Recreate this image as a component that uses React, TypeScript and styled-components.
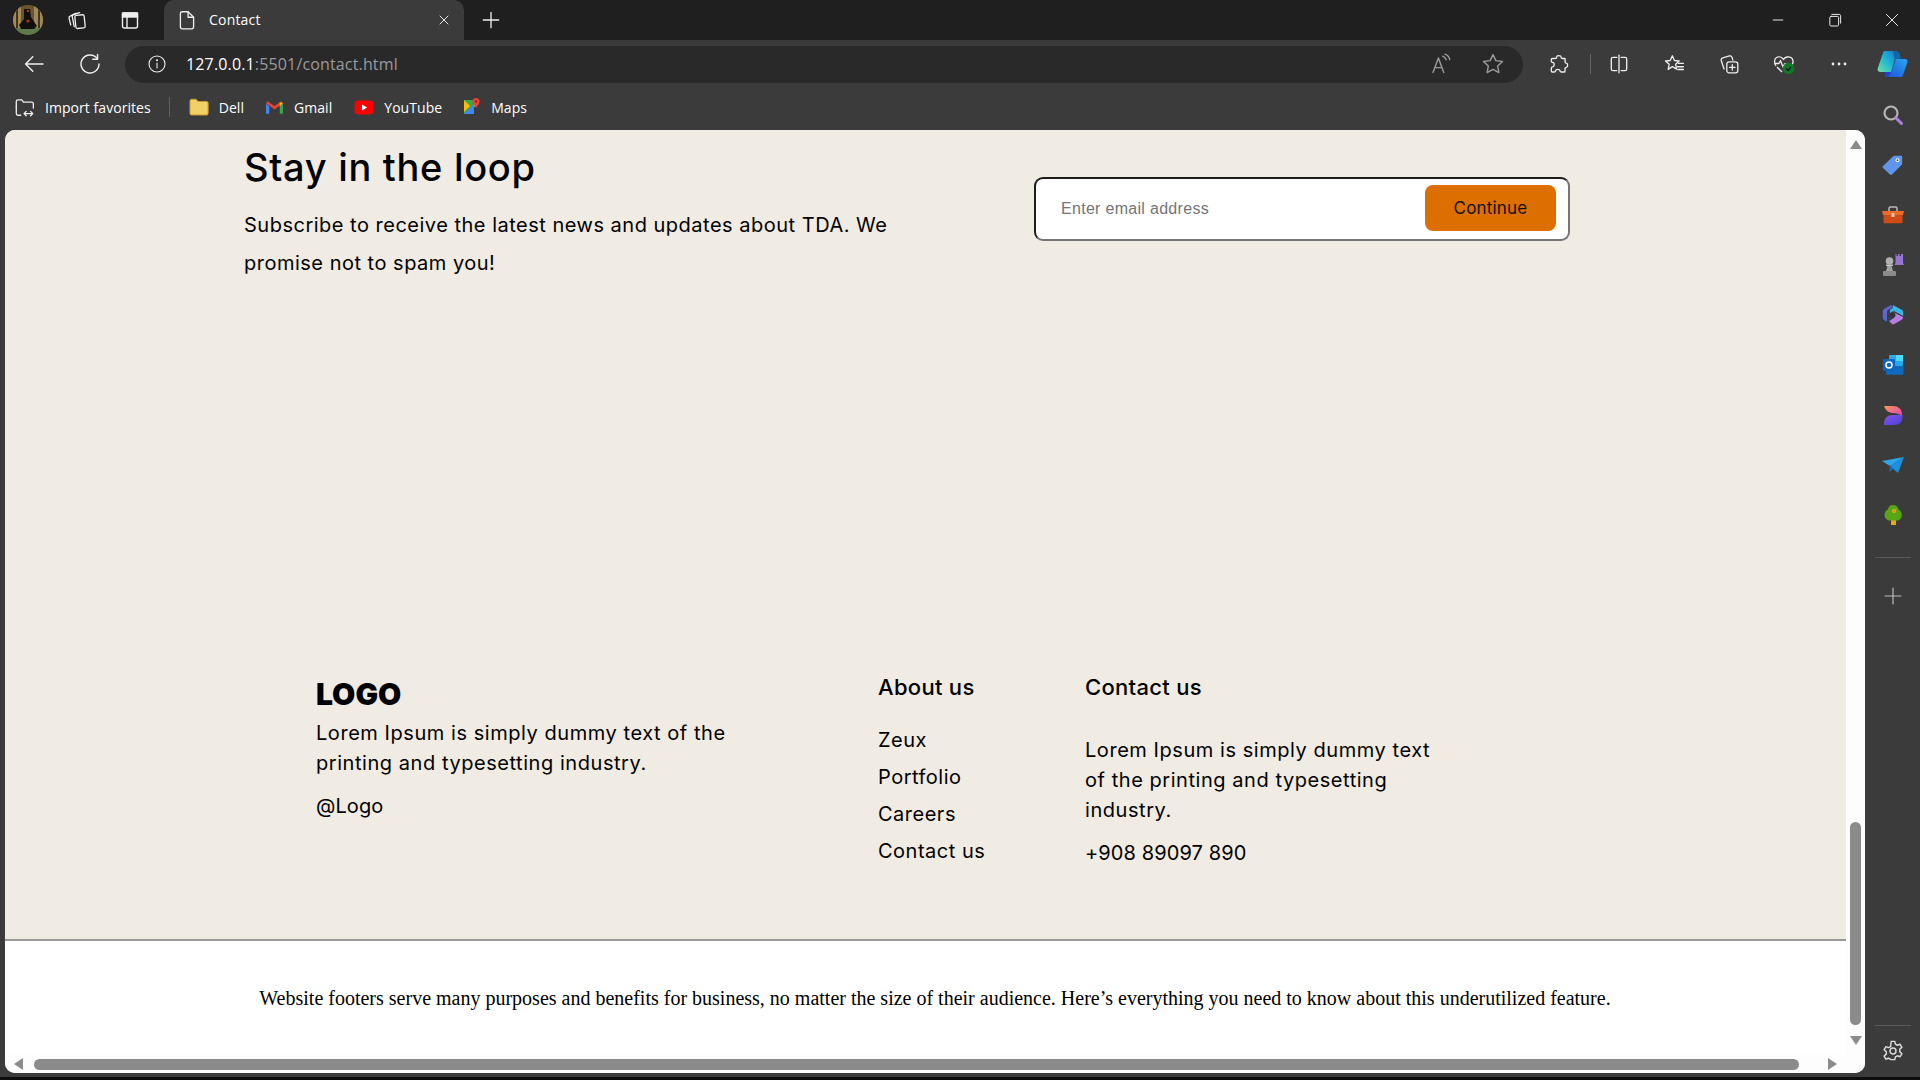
import React from "react";
import styled, { createGlobalStyle } from "styled-components";

const Global = createGlobalStyle`
  html, body { margin: 0; padding: 0; height: 100%; overflow: hidden; background: #111; }
  #root { height: 100%; }
  * { box-sizing: border-box; }
`;

const UI = `"Open Sans", "Liberation Sans", sans-serif`;
const PAGE = `Inter, "Open Sans", sans-serif`;

const Shell = styled.div`
  width: 1920px; height: 1080px; display: flex; flex-direction: column;
  background: #3b3b3b; border-bottom: 3px solid #0d0d0d; color: #fff; font-family: ${UI};
`;
const TabStrip = styled.div`
  height: 40px; flex: none; background: #1f1f1f; display: flex; align-items: center; padding-left: 4px;
`;
const StripBtn = styled.div<{ $gap?: number }>`
  width: 48px; height: 40px; display: flex; align-items: center; justify-content: center; flex: none;
  margin-left: ${(p) => p.$gap ?? 0}px;
`;
const Tab = styled.div`
  width: 300px; height: 40px; margin-left: 10px; background: #3b3b3b; border-radius: 10px 10px 0 0;
  display: flex; align-items: center; padding: 0 12px; gap: 11px; font-size: 14px; letter-spacing: 0.2px;
`;
const TabTitle = styled.span` flex: 1; padding-bottom: 2px; `;
const WinControls = styled.div` margin-left: auto; display: flex; align-items: center; `;
const WinBtn = styled.div`
  width: 57px; height: 40px; display: flex; align-items: center; justify-content: center;
`;
const Toolbar = styled.div`
  height: 50px; flex: none; display: flex; align-items: center; padding: 0 5px 2px 12px;
`;
const ToolBtn = styled.div<{ $gap?: number }>`
  width: 44px; height: 38px; flex: none; display: flex; align-items: center; justify-content: center;
  margin-left: ${(p) => p.$gap ?? 11}px;
`;
const FirstBtn = styled(ToolBtn)` margin-left: 0; `;
const AddressBar = styled.div`
  width: 1398px; height: 37px; margin-left: 13px; flex: none; border-radius: 19px; background: #292929;
  display: flex; align-items: center; padding-left: 22px; padding-right: 18px;
`;
const Url = styled.div`
  margin-left: 19px; font-size: 16px; letter-spacing: 0.15px; color: #fff; flex: 1;
`;
const UrlDim = styled.span` color: #9a9a9a; `;
const AddressIcon = styled.div` width: 24px; height: 24px; margin-left: 27px; display: flex; align-items: center; justify-content: center; `;
const VDivider = styled.div` width: 1px; height: 20px; background: #666; flex: none; margin: 0 6px 0 9px; `;
const Body = styled.div` flex: 1; min-height: 0; display: flex; `;
const LeftCol = styled.div` width: 1865px; display: flex; flex-direction: column; flex: none; `;
const Bookmarks = styled.div`
  height: 40px; flex: none; display: flex; align-items: center; padding-left: 13px; font-size: 14px; letter-spacing: 0.05px; padding-bottom: 6px;
`;
const Bookmark = styled.div<{ $gap: number }>`
  display: flex; align-items: center; gap: 10px; margin-left: ${(p) => p.$gap}px; white-space: nowrap;
`;
const BookSep = styled.div` width: 1px; height: 20px; background: #5f5f5f; margin-left: 18px; `;
const PageFrame = styled.div`
  flex: 1; min-height: 0; margin-left: 5px; margin-bottom: 4px; display: flex; background: #fff;
  border-radius: 10px 10px 10px 10px; overflow: hidden;
`;
const Viewport = styled.div` width: 1841px; flex: none; display: flex; flex-direction: column; `;
const Beige = styled.section`
  height: 811px; flex: none; background: #f0ebe3; border-bottom: 2px solid #9a9a9a; display: flex; flex-direction: column;
  color: #000; font-family: ${PAGE};
`;
const Loop = styled.div`
  display: flex; align-items: flex-start; padding: 10px 0 0 239px;
`;
const LoopText = styled.div` width: 790px; flex: none; `;
const Heading = styled.h2`
  margin: 0; font-size: 38px; line-height: 54px; font-weight: 500; letter-spacing: 0.7px;
`;
const LoopPara = styled.p`
  margin: 12px 0 0; font-size: 20px; line-height: 38px; width: 680px; letter-spacing: 0.5px;
`;
const EmailForm = styled.form`
  width: 536px; height: 64px; margin-top: 37px; background: #fff; border: 2px solid; border-color: #1c1c1c #767676 #767676 #1c1c1c;
  border-radius: 9px; display: flex; align-items: center; justify-content: space-between; padding: 0 12px 0 25px; flex: none;
`;
const Placeholder = styled.span`
  font-family: "Liberation Sans", Arial, sans-serif; font-size: 16px; color: #757575; letter-spacing: 0.3px;
`;
const Continue = styled.button`
  width: 131px; height: 46px; border: 0; border-radius: 8px; background: #dd6f00; color: #111; margin-bottom: 2px;
  font-family: ${PAGE}; font-size: 17px; letter-spacing: 0.2px;
`;
const FooterGrid = styled.div`
  margin-top: auto; padding: 0 0 71px 311px; display: grid; grid-template-columns: 562px 207px 360px; align-items: start;
`;
const Col = styled.div` font-size: 20px; line-height: 30px; `;
const LogoCol = styled(Col)` padding-top: 4px; `;
const Logo = styled.div`
  font-size: 30px; line-height: 36px; font-weight: 900;
`;
const Lorem = styled.p<{ $top: number; $w: number }>`
  margin: ${(p) => p.$top}px 0 0; width: ${(p) => p.$w}px; letter-spacing: 0.55px;
`;
const Note = styled.p`
  margin: 13px 0 0; letter-spacing: 0.1px;
`;
const ColTitle = styled.h4`
  margin: 0; font-size: 22px; line-height: 30px; font-weight: 500; letter-spacing: 0.3px;
`;
const LinkList = styled.ul`
  list-style: none; margin: 23px 0 0; padding: 0; display: flex; flex-direction: column; gap: 7px; letter-spacing: 0.5px;
`;
const Fine = styled.div`
  flex: 1; background: #fff; color: #000; font-family: "Liberation Serif", "Times New Roman", serif; font-size: 20px;
  text-align: center; padding: 46px 0 0 19px; line-height: 23px; white-space: nowrap;
`;
const HScroll = styled.div`
  height: 18px; flex: none; display: flex; align-items: center; background: #fdfdfd; padding: 0 9px;
`;
const HThumb = styled.div` height: 11px; width: 1765px; margin-left: 10px; border-radius: 6px; background: #8b8b8b; `;
const VScroll = styled.div`
  width: 19px; flex: none; display: flex; flex-direction: column; align-items: center; background: #fdfdfd; padding: 10px 0 28px;
`;
const VThumb = styled.div` width: 11px; height: 203px; margin-top: auto; margin-bottom: 11px; border-radius: 6px; background: #8b8b8b; `;
const RightArrow = styled.div` margin-left: auto; display: flex; `;
const Sidebar = styled.aside`
  width: 55px; flex: none; display: flex; flex-direction: column; align-items: center; padding: 0 0 1px 0;
`;
const SideIcon = styled.div`
  height: 50px; width: 30px; flex: none; display: flex; align-items: center; justify-content: center;
`;
const SideRule = styled.div<{ $top?: number; $bottom?: number }>`
  width: 36px; height: 1px; background: #5a5a5a; flex: none;
  margin: ${(p) => p.$top ?? 0}px 0 ${(p) => p.$bottom ?? 0}px;
`;
const Spacer = styled.div` flex: 1; `;

const S = (p: { size?: number; children: React.ReactNode; sw?: number; vb?: string; stroke?: string }) => (
  <svg width={p.size ?? 20} height={p.size ?? 20} viewBox={p.vb ?? "0 0 20 20"} fill="none" stroke={p.stroke ?? "#eee"} strokeWidth={p.sw ?? 1.2} strokeLinecap="round" strokeLinejoin="round">
    {p.children}
  </svg>
);

const Avatar = () => (
  <svg width="30" height="30" viewBox="0 0 30 30">
    <defs><clipPath id="av"><circle cx="15" cy="15" r="15" /></clipPath></defs>
    <g clipPath="url(#av)">
      <rect width="30" height="30" fill="#6a5530" />
      <rect x="0" y="0" width="8" height="24" fill="#a58a55" />
      <rect x="21" y="0" width="9" height="24" fill="#9c8a5c" />
      <rect x="3" y="0" width="2" height="24" fill="#43331c" />
      <rect x="25" y="0" width="2" height="24" fill="#43331c" />
      <rect x="0" y="23" width="30" height="7" fill="#5d7a4a" />
      <path d="M11 4h6l1 8 6 9-3 3H8l-2-4 5-6z" fill="#12100f" />
      <circle cx="15" cy="6" r="1.300" fill="#a32" />
      <circle cx="15" cy="16" r="1.600" fill="#a32" />
    </g>
  </svg>
);

const Copilot = () => (
  <svg width="32" height="32" viewBox="0 0 32 32">
    <defs>
      <linearGradient id="c1" x1="0" y1="1" x2="1" y2="0"><stop offset="0" stopColor="#6fe0a0" /><stop offset="0.5" stopColor="#1fb6d8" /><stop offset="1" stopColor="#1277c8" /></linearGradient>
      <linearGradient id="c2" x1="0" y1="1" x2="1" y2="0"><stop offset="0" stopColor="#1d4fd8" /><stop offset="1" stopColor="#29a8f0" /></linearGradient>
    </defs>
    <path d="M9 3h10c1.500 0 2 1 1.600 2.500L15 24H4.500C2 24 1 22 1.800 20L7 5c.4-1.300 1-2 2-2z" fill="url(#c1)" />
    <path d="M17 3h3c2 0 3 1 3.500 2.500L25 10l-6 3z" fill="#1266a8" />
    <path d="M20 11h9c2 0 3 1.800 2.400 3.500L27 27c-.6 1.500-1.500 2-3 2H10c-1 0-1.500-.5-1-1.500L15 24z" fill="url(#c2)" />
    <path d="M8 24h7l-3 5H10z" fill="#2340c8" />
  </svg>
);

const sideIcons: React.ReactNode[] = [
  <svg width="22" height="22" viewBox="0 0 22 22" key="a"><path d="M1 12 11 2.500c.5-.5 1-.7 1.700-.7H19c.7 0 1.200.5 1.200 1.200v6.300c0 .6-.2 1.200-.7 1.700L10 20.500c-.6.600-1.400.600-2 0l-7-6.500c-.6-.6-.6-1.400 0-2z" fill="#5f96e8" /><circle cx="15.500" cy="6.200" r="1.900" fill="#fff" /><circle cx="15.500" cy="6.200" r="0.900" fill="#333" /></svg>,
  <svg width="22" height="22" viewBox="0 0 22 22" key="b"><path d="M7 7V4.500C7 3.700 7.500 3 8.300 3h5.400c.8 0 1.300.7 1.300 1.500V7" fill="none" stroke="#bbb" strokeWidth="1.500" /><path d="M0 7h22l-1 4H1z" fill="#ee6a28" /><path d="M1.500 11h19v7c0 .8-.5 1.300-1.300 1.300H2.800c-.8 0-1.300-.5-1.300-1.300z" fill="#cf4b17" /><rect x="9.500" y="9" width="3" height="4" rx=".6" fill="#f3c9a8" /></svg>,
  <svg width="24" height="24" viewBox="0 0 24 24" key="c"><path d="M14.500 1v9l-1 2h9.500l-1-2V1h-2v2h-1.500V1h-1.500v2h-1.500V1z" fill="#9873d6" /><circle cx="8.500" cy="8" r="3.800" fill="#b0b0b0" /><rect x="5" y="11.500" width="7" height="1.500" fill="#c4c4c4" /><path d="M6.500 13h4l1.500 5H5z" fill="#a0a0a0" /><rect x="2" y="18" width="13" height="5" rx="1" fill="#8a8a8a" /></svg>,
  <svg width="22" height="22" viewBox="0 0 22 22" key="d"><defs><linearGradient id="m1" x1="0" y1="0" x2="1" y2="1"><stop offset="0" stopColor="#7a5fd0" /><stop offset="1" stopColor="#2f6fd8" /></linearGradient></defs><path d="M9 1 2 5c-.8.500-1.200 1.200-1.200 2v7c0 .8.400 1.500 1.200 2l3 1.700V8c0-1 .5-1.800 1.300-2.300L11 3z" fill="url(#m1)" /><path d="M11 1l9 5c.8.500 1.200 1 1.200 2v4L13 7.500c-.8-.4-1.600-.4-2.400 0L8 9V6l3-2.400z" fill="#3cb4e6" /><path d="M21 13 12 8.500V14l-5 3 3 3c.7.500 1.600.500 2.300 0l7.500-4.200c.8-.5 1.200-1.200 1.200-2.800z" fill="#b57ee0" /><circle cx="11" cy="11" r="2.500" fill="#333" /></svg>,
  <svg width="22" height="22" viewBox="0 0 22 22" key="e"><rect x="7" y="1" width="14" height="11" rx="1" fill="#28a8ea" /><path d="M4 12h17.500v7.500c0 .8-.5 1.300-1.300 1.300H5.500c-.8 0-1.500-.5-1.500-1.300z" fill="#0f6cbd" /><rect x="14" y="1" width="7" height="6" fill="#50d9ff" /><rect x="1" y="5" width="12" height="12" rx="1.200" fill="#0a66c2" /><circle cx="7" cy="11" r="3" fill="none" stroke="#fff" strokeWidth="1.500" /></svg>,
  <svg width="22" height="22" viewBox="0 0 22 22" key="f"><defs><linearGradient id="d1" x1="0" y1="0" x2="1" y2="1"><stop offset="0" stopColor="#ff9a50" /><stop offset="1" stopColor="#d93bc0" /></linearGradient><linearGradient id="d2" x1="0" y1="0" x2="1" y2="1"><stop offset="0" stopColor="#8a55e8" /><stop offset="1" stopColor="#4a3fd8" /></linearGradient></defs><path d="M2 2h9c5 0 9 3 9 8v3c-2-3-5-4-9-4-4 0-7-2-9-7z" fill="url(#d1)" /><path d="M3 21c-1 0-1.200-.5-1-1.500C2.500 14 5 11 11 11h9c.5 0 .5 1 .5 1.500 0 5-3 8.500-8.500 8.500z" fill="url(#d2)" /></svg>,
  <svg width="24" height="20" viewBox="0 0 24 20" key="g"><path d="M1 6 23 2 9 11z" fill="#29a9ea" /><path d="M9 11 23 2 17 18z" fill="#1e8fe0" /><path d="M9 11l3.500 3L8 17z" fill="#0f6cbd" /></svg>,
  <svg width="20" height="22" viewBox="0 0 20 22" key="h"><rect x="8" y="16" width="5" height="5" fill="#e4a90f" /><path d="M10 1c3 0 5 2 5.500 4.500 2 1 3.300 3 3.300 5.500 0 3-2 5.500-5 5.500H7C4 16.500 1.500 14 1.500 11c0-2.500 1.300-4.500 3.300-5.500C5.300 3 7 1 10 1z" fill="#58a618" /><circle cx="11" cy="7" r="2" fill="#f0b41a" /><circle cx="11" cy="7" r=".8" fill="#e0541c" /></svg>,
];

export default function App() {
  return (
    <Shell>
      <Global />
      <TabStrip>
        <StripBtn><Avatar /></StripBtn>
        <StripBtn $gap={1}>
          <S size={22}><rect x="8.500" y="5.500" width="8.500" height="12" rx="1.500" transform="rotate(-6 12.700 11.500)" /><path d="M7.500 16 5.700 7c-.2-1 .2-1.700 1.200-2l5.500-1.700" /><path d="M4.300 14.500 2.800 8.500c-.2-1 .2-1.700 1-2L9 4" /></S>
        </StripBtn>
        <StripBtn $gap={5}>
          <svg width="20" height="20" viewBox="0 0 20 20" fill="none" stroke="#eee" strokeWidth="1.400"><rect x="2.500" y="3" width="15" height="15" rx="2" /><rect x="2.500" y="3" width="15" height="4" fill="#eee" /><path d="M7 7v11" /></svg>
        </StripBtn>
        <Tab>
          <S size={22}><path d="M5.500 2.500h5.500L16 7.500v8.700c0 1-.6 1.800-1.700 1.800H5.700C4.600 18 4 17.200 4 16.200V4.300C4 3.200 4.600 2.500 5.500 2.500z" /><path d="M11 2.500v5h5" /></S>
          <TabTitle>Contact</TabTitle>
          <S size={16}><path d="M5 5l10 10M15 5 5 15" /></S>
        </Tab>
        <StripBtn $gap={3}><S size={22}><path d="M10 3v14M3 10h14" /></S></StripBtn>
        <WinControls>
          <WinBtn><S size={16}><path d="M4 10h12" /></S></WinBtn>
          <WinBtn><S size={16}><rect x="3.500" y="5.500" width="11" height="12" rx="1.500" /><path d="M6 3h9c1.500 0 2 .8 2 2v9" /></S></WinBtn>
          <WinBtn><S size={16}><path d="M3 3l14 14M17 3 3 17" /></S></WinBtn>
        </WinControls>
      </TabStrip>
      <Toolbar>
        <FirstBtn><S size={24}><path d="M17.500 10H3M9 4l-6 6 6 6" /></S></FirstBtn>
        <ToolBtn $gap={12}><S size={24}><path d="M16 5.500A7.500 7.500 0 1 0 17.500 10" /><path d="M16.300 2v4h-4" /></S></ToolBtn>
        <AddressBar>
          <S size={20} sw={1.100}><circle cx="10" cy="10" r="8" /><path d="M10 9v5" /><circle cx="10" cy="6.300" r=".5" fill="#eee" /></S>
          <Url>127.0.0.1<UrlDim>:5501/contact.html</UrlDim></Url>
          <AddressIcon>
            <S size={24} stroke="#9a9a9a"><path d="M2.500 17 7 5l4.500 12M4 13h6" /><path d="M10.500 3.500c1.500.6 2.500 1.600 3 3M12.500 1.800c2 .8 3.500 2.300 4 4.500" /></S>
          </AddressIcon>
          <AddressIcon>
            <S size={24} stroke="#9a9a9a"><path d="M10 2.200l2.400 5 5.500.7-4 3.800 1 5.400L10 14.500l-4.900 2.600 1-5.400-4-3.800 5.500-.7z" /></S>
          </AddressIcon>
        </AddressBar>
        <ToolBtn $gap={14}><S size={22}><path d="M8 3.500c0-1.500 3.800-1.500 3.800 0 0 1 .3 1.500 1.300 1.500h2.400v3c0 .8.700 1.200 1.200 1.200 1.500 0 1.500 3.800 0 3.800-.6 0-1.200.4-1.200 1.200v2.300c0 .5-.5.800-1 .8h-2.500c-.8 0-1.200-.6-1.200-1.300 0-1.500-3.800-1.500-3.800 0 0 .7-.5 1.300-1.200 1.300H4c-.5 0-1-.4-1-1V13.800c0-.7.600-1.200 1.200-1.200C6 12.500 6 8.500 4.200 8.500 3.600 8.500 3 8 3 7.300V6c0-.6.500-1 1-1h2.700C7.500 5 8 4.400 8 3.500z" /></S></ToolBtn>
        <VDivider />
        <ToolBtn $gap={0}><S size={22}><path d="M10 2v16" /><path d="M8 4H4.500C3.500 4 3 4.600 3 5.500v9c0 .9.500 1.500 1.500 1.500H8M12 4h3.500c1 0 1.500.6 1.500 1.500v9c0 .9-.5 1.500-1.500 1.500H12" /></S></ToolBtn>
        <ToolBtn><S size={22}><path d="M8.500 2.500l1.900 4.300 4.300.5-3.200 3 .8 4.300-3.800-2.200-3.800 2.500.9-4.600L2.300 7.300l4.300-.5z" /><path d="M14 9.500h4.500M13 12.500h5.500M13.500 15h5" /></S></ToolBtn>
        <ToolBtn><S size={22}><rect x="8" y="8" width="10" height="10" rx="2" /><path d="M13 10.500v5M10.500 13h5" /><path d="M5.500 14.500 3 7c-.4-1.200.2-2.300 1.400-2.600l6-1.700c1.200-.3 2 .3 2.400 1.300l.7 2.500" /></S></ToolBtn>
        <ToolBtn>
          <svg width="24" height="24" viewBox="0 0 24 24" fill="none" stroke="#eee" strokeWidth="1.300" strokeLinejoin="round"><path d="M4 14C2 11 2 7 4.500 5.500 7 4 10 5 11.500 7.500 13 5 16.500 4 19 5.500c2.500 1.500 2.500 5 1.200 7" /><path d="M2.500 11.500H7l1.500-3 2.500 6.500 1.500-3h2" /><path d="M5 15l5 5" /><circle cx="16.500" cy="16.500" r="5.800" fill="#0f7b24" stroke="none" /><path d="M14 16.500l2 2 3-3.500" stroke="#113" strokeWidth="1.200" /></svg>
        </ToolBtn>
        <ToolBtn><svg width="18" height="4" viewBox="0 0 18 4"><circle cx="3" cy="2" r="1.400" fill="#eee" /><circle cx="9" cy="2" r="1.400" fill="#eee" /><circle cx="15" cy="2" r="1.400" fill="#eee" /></svg></ToolBtn>
        <ToolBtn $gap={9}><Copilot /></ToolBtn>
      </Toolbar>
      <Body>
        <LeftCol>
          <Bookmarks>
            <Bookmark $gap={0}>
              <S size={22}><path d="M3 10V5c0-1 .6-1.500 1.500-1.500H8l1.500 2H17c1 0 1.500.6 1.500 1.500v4" /><path d="M3 10v6c0 1 .6 1.500 1.500 1.500H7" /><path d="M10 16h8M16 14l2 2-2 2M12 14l-2 2 2 2" /></S>
              Import favorites
            </Bookmark>
            <BookSep />
            <Bookmark $gap={19}>
              <svg width="20" height="18" viewBox="0 0 20 18"><path d="M1 3c0-1 .6-1.800 1.600-1.800H7l2 2.300h8.500c1 0 1.600.6 1.600 1.600v10.300c0 1-.6 1.600-1.600 1.600h-15C1.600 17 1 16.400 1 15.400z" fill="#f3cf67" stroke="#c99b2e" /></svg>
              Dell
            </Bookmark>
            <Bookmark $gap={21}>
              <svg width="19" height="15" viewBox="0 0 18 14"><path d="M1 3v10h3V6z" fill="#4285f4" /><path d="M14 6v7h3V3z" fill="#34a853" /><path d="M1 3 9 9l8-6-1.500-2L9 5.500 2.500 1z" fill="#ea4335" /><path d="M14 2v4l3-3z" fill="#fbbc04" /></svg>
              Gmail
            </Bookmark>
            <Bookmark $gap={22}>
              <svg width="20" height="15" viewBox="0 0 20 15"><rect x="0.500" y="0.500" width="19" height="14" rx="4" fill="#f00" /><path d="M8 4.500 13 7.500 8 10.500z" fill="#fff" /></svg>
              YouTube
            </Bookmark>
            <Bookmark $gap={21}>
              <svg width="18" height="20" viewBox="0 0 18 20"><path d="M1 3h10v14H1z" fill="#34a853" /><path d="M1 17 11 7v10z" fill="#4285f4" /><path d="M1 3l6 6-6 6z" fill="#fbbc04" /><path d="M11 3h3v4l-3 3z" fill="#ddd" /><circle cx="13" cy="4.500" r="3.500" fill="#ea4335" /><circle cx="13" cy="4.500" r="1.200" fill="#a5201a" /><path d="M10 6.500h6L13 11z" fill="#ea4335" /></svg>
              Maps
            </Bookmark>
          </Bookmarks>
          <PageFrame>
            <Viewport>
              <Beige>
                <Loop>
                  <LoopText>
                    <Heading>Stay in the loop</Heading>
                    <LoopPara>Subscribe to receive the latest news and updates about TDA. We promise not to spam you!</LoopPara>
                  </LoopText>
                  <EmailForm>
                    <Placeholder>Enter email address</Placeholder>
                    <Continue type="button">Continue</Continue>
                  </EmailForm>
                </Loop>
                <FooterGrid>
                  <LogoCol>
                    <Logo>LOGO</Logo>
                    <Lorem $top={6} $w={440}>Lorem Ipsum is simply dummy text of the printing and typesetting industry.</Lorem>
                    <Note>@Logo</Note>
                  </LogoCol>
                  <Col>
                    <ColTitle>About us</ColTitle>
                    <LinkList>
                      <li>Zeux</li>
                      <li>Portfolio</li>
                      <li>Careers</li>
                      <li>Contact us</li>
                    </LinkList>
                  </Col>
                  <Col>
                    <ColTitle>Contact us</ColTitle>
                    <Lorem $top={33} $w={360}>Lorem Ipsum is simply dummy text of the printing and typesetting industry.</Lorem>
                    <Note>+908 89097 890</Note>
                  </Col>
                </FooterGrid>
              </Beige>
              <Fine>Website footers serve many purposes and benefits for business, no matter the size of their audience. Here’s everything you need to know about this underutilized feature.</Fine>
              <HScroll>
                <svg width="10" height="12" viewBox="0 0 10 12"><path d="M9 0v12L0 6z" fill="#8b8b8b" /></svg>
                <HThumb />
                <RightArrow><svg width="10" height="12" viewBox="0 0 10 12"><path d="M1 0v12l9-6z" fill="#8b8b8b" /></svg></RightArrow>
              </HScroll>
            </Viewport>
            <VScroll>
              <svg width="12" height="9" viewBox="0 0 12 9"><path d="M0 9h12L6 0z" fill="#8b8b8b" /></svg>
              <VThumb />
              <svg width="12" height="9" viewBox="0 0 12 9"><path d="M0 0h12L6 9z" fill="#8b8b8b" /></svg>
            </VScroll>
          </PageFrame>
        </LeftCol>
        <Sidebar>
          <SideIcon>
            <svg width="22" height="22" viewBox="0 0 22 22" fill="none"><circle cx="9" cy="9" r="6.500" stroke="#b5b5b5" strokeWidth="2.200" /><path d="M14 14l5.500 5.500" stroke="#b07ee0" strokeWidth="3" strokeLinecap="round" /></svg>
          </SideIcon>
          {sideIcons.map((icon, i) => <SideIcon key={i}>{icon}</SideIcon>)}
          <SideRule $top={17} $bottom={13} />
          <SideIcon><S size={20} stroke="#bbb"><path d="M10 2v16M2 10h16" /></S></SideIcon>
          <Spacer />
          <SideRule />
          <SideIcon>
            <S size={24} stroke="#ddd"><circle cx="10" cy="10" r="2.500" /><path d="M8.500 2h3l.5 2.300 1.700.9 2.200-.8 1.500 2.600-1.800 1.600v2l1.800 1.600-1.500 2.600-2.200-.8-1.700.9-.5 2.300h-3L8 16.900l-1.700-.9-2.200.8-1.500-2.600 1.800-1.600v-2L2.600 9 4.100 6.400l2.200.8L8 6.300z" /></S>
          </SideIcon>
        </Sidebar>
      </Body>
    </Shell>
  );
}
